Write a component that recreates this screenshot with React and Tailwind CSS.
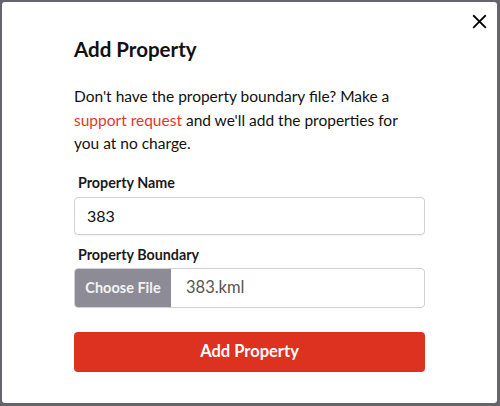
import React from "react";

export default function App() {
  return (
    <div className="w-[500px] h-[406px] bg-[#66656b] pt-[2px] pl-[2px] pr-[3px] pb-[3px]" style={{ fontFamily: "Lato, 'Open Sans', sans-serif" }}>
      <div className="relative w-full h-full bg-white rounded-[3px] pt-[35px] px-[72px]">
        <button className="absolute right-[8px] top-[9px] w-[20px] h-[20px] flex items-center justify-center text-black">
          <svg width="15" height="15" viewBox="0 0 16 16" fill="none" stroke="currentColor" strokeWidth="2" strokeLinecap="square">
            <path d="M2 2L14 14M14 2L2 14" />
          </svg>
        </button>
        <h2 className="text-[20.5px] font-bold text-[#111] leading-[25px]">Add Property</h2>
        <p className="mt-[23px] text-[15.5px] leading-[23.5px] text-[#111]">
          Don't have the property boundary file? Make a{" "}
          <span className="text-[#e0392a]">support request</span> and we'll add the properties for you at no charge.
        </p>
        <div className="mt-[18px] pl-[4px] text-[14.3px] font-bold text-[#1a1a1a] leading-[18px]">Property Name</div>
        <div className="mt-[5px] h-[38px] border border-[#d0d0d8] rounded-[4px] flex items-center px-[12px] text-[16px] text-[#111] shadow-[0_1px_1px_rgba(0,0,0,0.05)]">383</div>
        <div className="mt-[11px] pl-[4px] text-[14.3px] font-bold text-[#1a1a1a] leading-[18px]">Property Boundary</div>
        <div className="mt-[4px] h-[40px] border border-[#d0d0d8] rounded-[4px] flex overflow-hidden">
          <div className="w-[96px] bg-[#8d8c96] text-[#f2f2f2] text-[14.5px] font-bold flex items-center justify-center">Choose File</div>
          <div className="flex items-center pl-[15px] text-[16.5px] text-[#555]">383.kml</div>
        </div>
        <button className="mt-[24px] w-full h-[40px] bg-[#dc321f] rounded-[4px] text-white text-[16.5px] font-bold">Add Property</button>
      </div>
    </div>
  );
}
